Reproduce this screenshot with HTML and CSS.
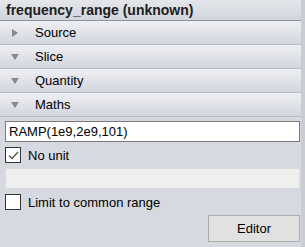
FILE: index.html
```html
<!DOCTYPE html>
<html lang="en">
<head>
    <meta charset="UTF-8">
    <title>frequency_range</title>
    <link rel="stylesheet" href="styles.css">
</head>
<body>
    <div class="panel">
        <div class="panel-title">frequency_range (unknown)</div>

        <div class="section collapsed"><span class="arrow"></span>Source</div>
        <div class="section"><span class="arrow"></span>Slice</div>
        <div class="section"><span class="arrow"></span>Quantity</div>
        <div class="section"><span class="arrow"></span>Maths</div>

        <div class="maths-body">
            <input type="text" class="expr-input" value="RAMP(1e9,2e9,101)">

            <label class="check-row">
                <span class="check-box checked">
                    <svg width="13" height="13" viewBox="0 0 13 13"><path d="M2 6.5 L5 9.5 L11 3" fill="none" stroke="#555" stroke-width="1.3"/></svg>
                </span>
                No unit
            </label>

            <input type="text" class="unit-input" disabled>

            <label class="check-row">
                <span class="check-box"></span>
                Limit to common range
            </label>

            <div class="actions">
                <button class="editor-btn">Editor</button>
            </div>
        </div>
    </div>
</body>
</html>
```

FILE: styles.css
```css
body {
    margin: 0;
    font-family: "Liberation Sans", Arial, sans-serif;
    font-size: 13px;
    color: #000;
    background-color: #d6d9e0;
}

.panel {
    width: 301px;
    height: 247px;
    background-color: #d6d9e0;
    border-right: 4px solid #c9ccd3;
    display: flex;
    flex-direction: column;
}

.panel-title {
    height: 20px;
    line-height: 20px;
    padding-left: 6px;
    font-size: 14px;
    font-weight: bold;
    color: #202020;
    background: linear-gradient(#e4e6eb, #d2d5dc);
    border-bottom: 1px solid #8e929a;
}

.section {
    height: 23px;
    line-height: 23px;
    display: flex;
    align-items: center;
    padding-left: 11px;
    background: linear-gradient(#eef0f4, #e2e4ea 45%, #d3d6dd);
    border-bottom: 1px solid #b8bcc5;
}

.arrow {
    width: 0;
    height: 0;
    margin-right: 16px;
    border-left: 4px solid transparent;
    border-right: 4px solid transparent;
    border-top: 6px solid #888;
}

.section.collapsed .arrow {
    border-top: 4px solid transparent;
    border-bottom: 4px solid transparent;
    border-left: 6px solid #888;
    border-right: 0;
    margin-left: 1px;
    margin-right: 17px;
}

.maths-body {
    padding: 4px 0 0 5px;
    display: flex;
    flex-direction: column;
}

.expr-input,
.unit-input {
    box-sizing: border-box;
    width: 295px;
    height: 21px;
    margin: 0;
    padding: 0 3px;
    font-family: inherit;
    font-size: 13px;
    outline: none;
}

.expr-input {
    border: 1px solid #7a7a7a;
    background-color: #fff;
    color: #000;
}

.unit-input {
    border: 1px solid #dcdcdc;
    background-color: #efefef;
}

.check-row {
    display: flex;
    align-items: center;
    height: 16px;
    margin: 5px 0;
}

.check-box {
    box-sizing: border-box;
    width: 16px;
    height: 16px;
    margin-right: 7px;
    border: 1px solid #333;
    background-color: #fff;
    display: flex;
    align-items: center;
    justify-content: center;
}

.actions {
    display: flex;
    justify-content: flex-end;
    padding-right: 1px;
}

.editor-btn {
    width: 92px;
    height: 27px;
    margin-top: 0;
    font-family: inherit;
    font-size: 13px;
    color: #000;
    background-color: #e1e1e1;
    border: 1px solid #adadad;
}
```
